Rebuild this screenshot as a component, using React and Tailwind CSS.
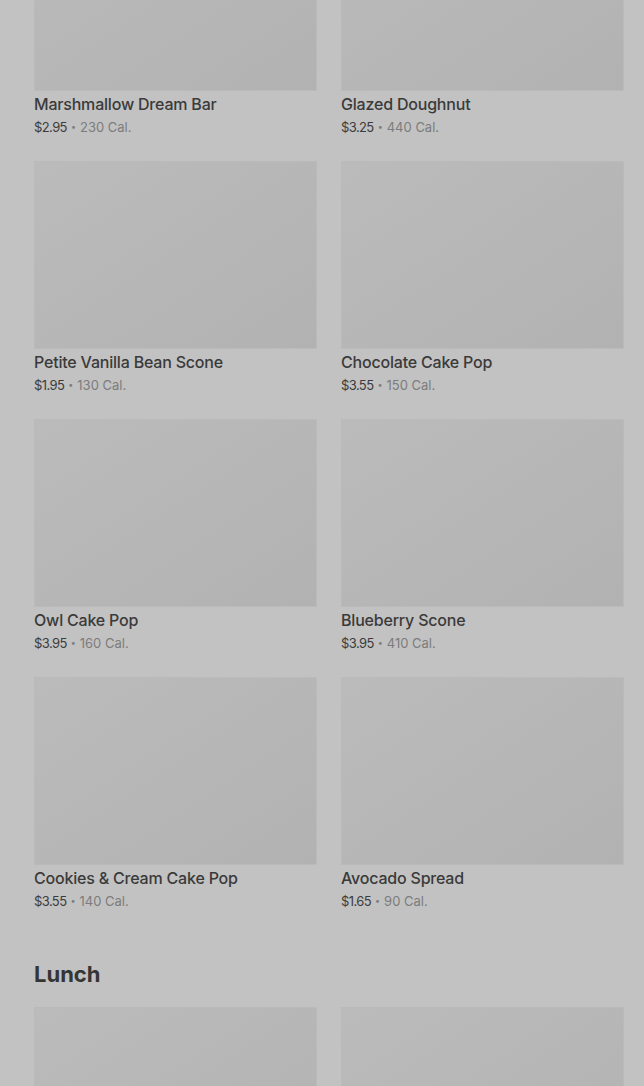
import React from "react";

const items = [
  ["Marshmallow Dream Bar", "$2.95", "230"],
  ["Glazed Doughnut", "$3.25", "440"],
  ["Petite Vanilla Bean Scone", "$1.95", "130"],
  ["Chocolate Cake Pop", "$3.55", "150"],
  ["Owl Cake Pop", "$3.95", "160"],
  ["Blueberry Scone", "$3.95", "410"],
  ["Cookies & Cream Cake Pop", "$3.55", "140"],
  ["Avocado Spread", "$1.65", "90"],
];

function Img() {
  return (
    <div className="h-[188px] w-full border border-[#bababa] bg-gradient-to-br from-[#bbbbbb] to-[#b2b2b2]" />
  );
}

function Card({ name, price, cal }) {
  return (
    <div className="flex flex-col">
      <Img />
      <div className="mt-px text-[16px] leading-[24px] font-medium tracking-[-0.2px] text-[#3a3a3a]">{name}</div>
      <div className="flex items-center text-[13px] leading-[22px]">
        <span className="tracking-[-0.6px] text-[#3c3c3c]">{price}</span>
        <span className="mx-[4px] text-[9px] text-[#7c7c7c]">•</span>
        <span className="text-[#7c7c7c]">{cal} Cal.</span>
      </div>
    </div>
  );
}

export default function App() {
  return (
    <div
      className="h-[1086px] overflow-hidden bg-[#c2c2c2] pl-[34px] pr-[20px]"
      style={{ fontFamily: "Inter, 'Noto Sans', sans-serif" }}
    >
      <div className="-mt-[97px] grid grid-cols-2 gap-x-[24px] gap-y-[23px]">
        {items.map(([n, p, c]) => (
          <Card key={n} name={n} price={p} cal={c} />
        ))}
      </div>
      <h2 className="mt-[46px] mb-[17px] text-[22px] leading-[32px] font-bold text-[#353535]">Lunch</h2>
      <div className="grid grid-cols-2 gap-x-[24px]">
        <Img />
        <Img />
      </div>
    </div>
  );
}
